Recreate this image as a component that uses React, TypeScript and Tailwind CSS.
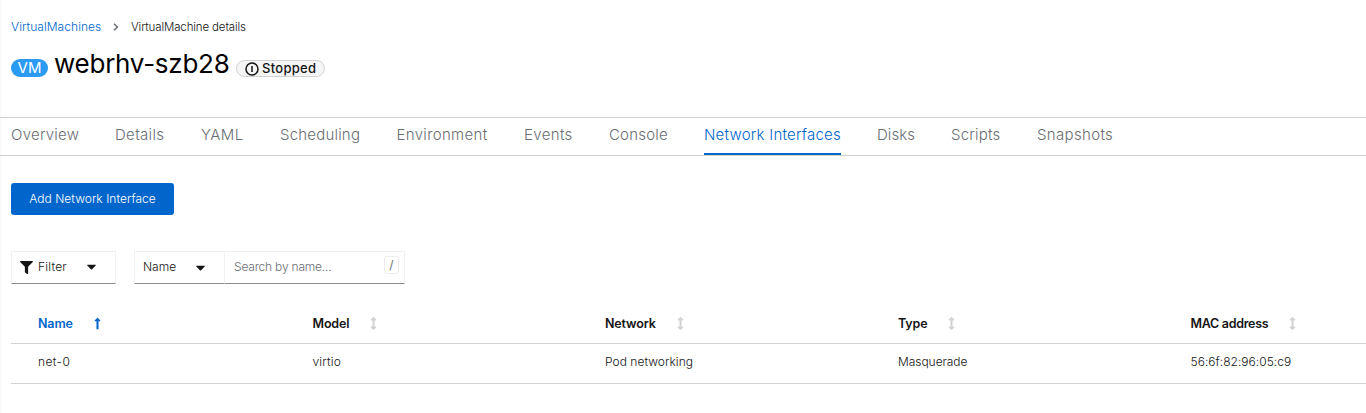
import { FaArrowsAltV, FaCaretDown, FaFilter, FaLongArrowAltUp } from "react-icons/fa";

const tabs = [
  { label: "Overview", size: "w-[68px] tracking-[0.25px]" },
  { label: "Details", size: "w-[50px] tracking-[0.33px]" },
  { label: "YAML", size: "w-[43px] tracking-[0.4px]" },
  { label: "Scheduling", size: "w-[80.5px] tracking-[0.2px]" },
  { label: "Environment", size: "w-[91.5px] tracking-[0.34px]" },
  { label: "Events", size: "w-[49px] tracking-[0.35px]" },
  { label: "Console", size: "w-[59px] tracking-[0.2px]" },
  { label: "Network Interfaces", size: "w-[137px] tracking-[0.23px]", active: true },
  { label: "Disks", size: "w-[38px] tracking-[0.05px]" },
  { label: "Scripts", size: "w-[50px] tracking-[0.2px]" },
  { label: "Snapshots", size: "w-[76px] tracking-[0.34px]" },
];

const columns = [
  { label: "Name", size: "w-[35px] tracking-[-0.14px]", value: "net-0", spacing: "tracking-[0.4px]", sorted: true },
  { label: "Model", size: "w-[37px] tracking-[-0.14px]", value: "virtio", spacing: "tracking-[0.2px]" },
  { label: "Network", size: "w-[51px] tracking-[-0.14px]", value: "Pod networking", spacing: "tracking-[0.03px]" },
  { label: "Type", size: "w-[29px] tracking-[-0.14px]", value: "Masquerade", spacing: "tracking-[-0.05px]" },
  { label: "MAC address", size: "w-[78px] tracking-[-0.3px]", value: "56:6f:82:96:05:c9", spacing: "tracking-[0.03px]" },
];

const tableGrid = "grid grid-cols-[274.5px_292.5px_293px_292.5px_1fr] border-b border-[#d2d2d2] pl-[27px]";

function StoppedIcon() {
  return (
    <svg viewBox="0 0 14 14" className="size-[14px] shrink-0" fill="none" stroke="#151515">
      <circle cx="7" cy="7" r="6" strokeWidth="1.5" />
      <path d="M7 4v6" strokeWidth="1.5" />
    </svg>
  );
}

export default function App() {
  return (
    <div className="h-[413px] w-full overflow-hidden bg-[linear-gradient(to_right,#fafafa_2px,#fff_2px)] font-['Inter',sans-serif] text-[12px] text-[#151515]">
      <nav className="flex h-[38px] items-center pt-[16px] pl-[11px] leading-[20px]">
        <a className="w-[90px] tracking-[0.05px] whitespace-nowrap text-[#06c] font-[350]">VirtualMachines</a>
        <svg viewBox="0 0 6 8" className="ml-[12px] h-[8px] w-[6px]" fill="none" stroke="#6a6e73" strokeWidth="1.5">
          <path d="M1 .8 4.4 4 1 7.2" />
        </svg>
        <span className="ml-[12px] text-[11.5px] font-[350] tracking-[-0.14px] whitespace-nowrap">VirtualMachine details</span>
      </nav>

      <header className="flex h-[79px] items-start pl-[11px]">
        <span className="mt-[21px] flex h-[18px] w-[37px] items-center justify-center rounded-full bg-[#2b9af3] text-[15px] leading-[18px] text-white">
          VM
        </span>
        <h1 className="mt-[9px] ml-[6px] w-[176px] text-[26px] leading-[34px] font-[430] tracking-[-0.25px] whitespace-nowrap text-black">
          webrhv-szb28
        </h1>
        <span className="mt-[22px] ml-[6px] flex h-[17px] w-[89px] items-center rounded-full border border-[#d2d2d2] bg-[#f5f5f5] pl-[8px]">
          <StoppedIcon />
          <span className="ml-[3px] text-[13px] leading-[15px] font-medium tracking-[0.3px]">Stopped</span>
        </span>
      </header>

      <div className="flex h-[39px] gap-[36px] border-y border-[#d2d2d2] pl-[11px]">
        {tabs.map((tab) => (
          <button
            key={tab.label}
            className={`${tab.size} h-[37px] shrink-0 border-b-2 pb-[2px] text-left text-[15px] leading-[20px] font-[350] whitespace-nowrap ${
              tab.active ? "border-[#06c] text-[#06c]" : "border-transparent text-[#6a6e73]"
            }`}
          >
            {tab.label}
          </button>
        ))}
      </div>

      <main className="pt-[27px] pl-[11px]">
        <button className="flex h-[32px] w-[163px] items-center justify-center rounded-[3px] bg-[#06c] font-[350] tracking-[0.04px] whitespace-nowrap text-white">
          Add Network Interface
        </button>

        <div className="mt-[36px] flex h-[33px]">
          <button className="flex w-[105px] items-center border border-[#f0f0f0] border-b-[#8a8d90] pl-[8px]">
            <FaFilter className="size-[13px]" />
            <span className="mb-[2px] ml-[5px] w-[30px] text-left font-[350] tracking-[0.2px]">Filter</span>
            <FaCaretDown className="mb-[2px] ml-[16px] size-[15px]" />
          </button>
          <button className="ml-[18px] flex w-[90px] items-center border border-r-0 border-[#f0f0f0] border-b-[#8a8d90] pl-[8px]">
            <span className="mb-[2px] w-[34px] text-left font-[350]">Name</span>
            <FaCaretDown className="ml-[16px] size-[15px]" />
          </button>
          <div className="flex w-[181px] items-center border border-[#f0f0f0] border-b-[#8a8d90] pl-[9px]">
            <span className="mb-[2px] w-[150px] font-[350] tracking-[-0.2px] text-[#6a6e73]">Search by name...</span>
            <kbd className="mb-[5px] flex h-[18px] w-[15px] items-center justify-center rounded-[3px] border border-[#ececec] font-['Inter',sans-serif] text-[12px] text-[#6a6e73]">
              /
            </kbd>
          </div>
        </div>

        <div className="mt-[20px]">
          <div className={`${tableGrid} h-[40px]`}>
            {columns.map((column) => (
              <div key={column.label} className={`flex items-center text-[12.5px] font-semibold ${column.sorted ? "text-[#06c]" : ""}`}>
                <span className={`${column.size} mt-[1px] whitespace-nowrap`}>{column.label}</span>
                {column.sorted ? (
                  <FaLongArrowAltUp className="ml-[17.5px] size-[13px]" />
                ) : (
                  <FaArrowsAltV className="ml-[17.5px] size-[13px] text-[#d2d2d2]" />
                )}
              </div>
            ))}
          </div>
          <div className={`${tableGrid} h-[40px]`}>
            {columns.map((column) => (
              <div key={column.label} className={`${column.spacing} flex items-center pb-[3px] font-[350] whitespace-nowrap`}>
                {column.value}
              </div>
            ))}
          </div>
        </div>
      </main>
    </div>
  );
}
